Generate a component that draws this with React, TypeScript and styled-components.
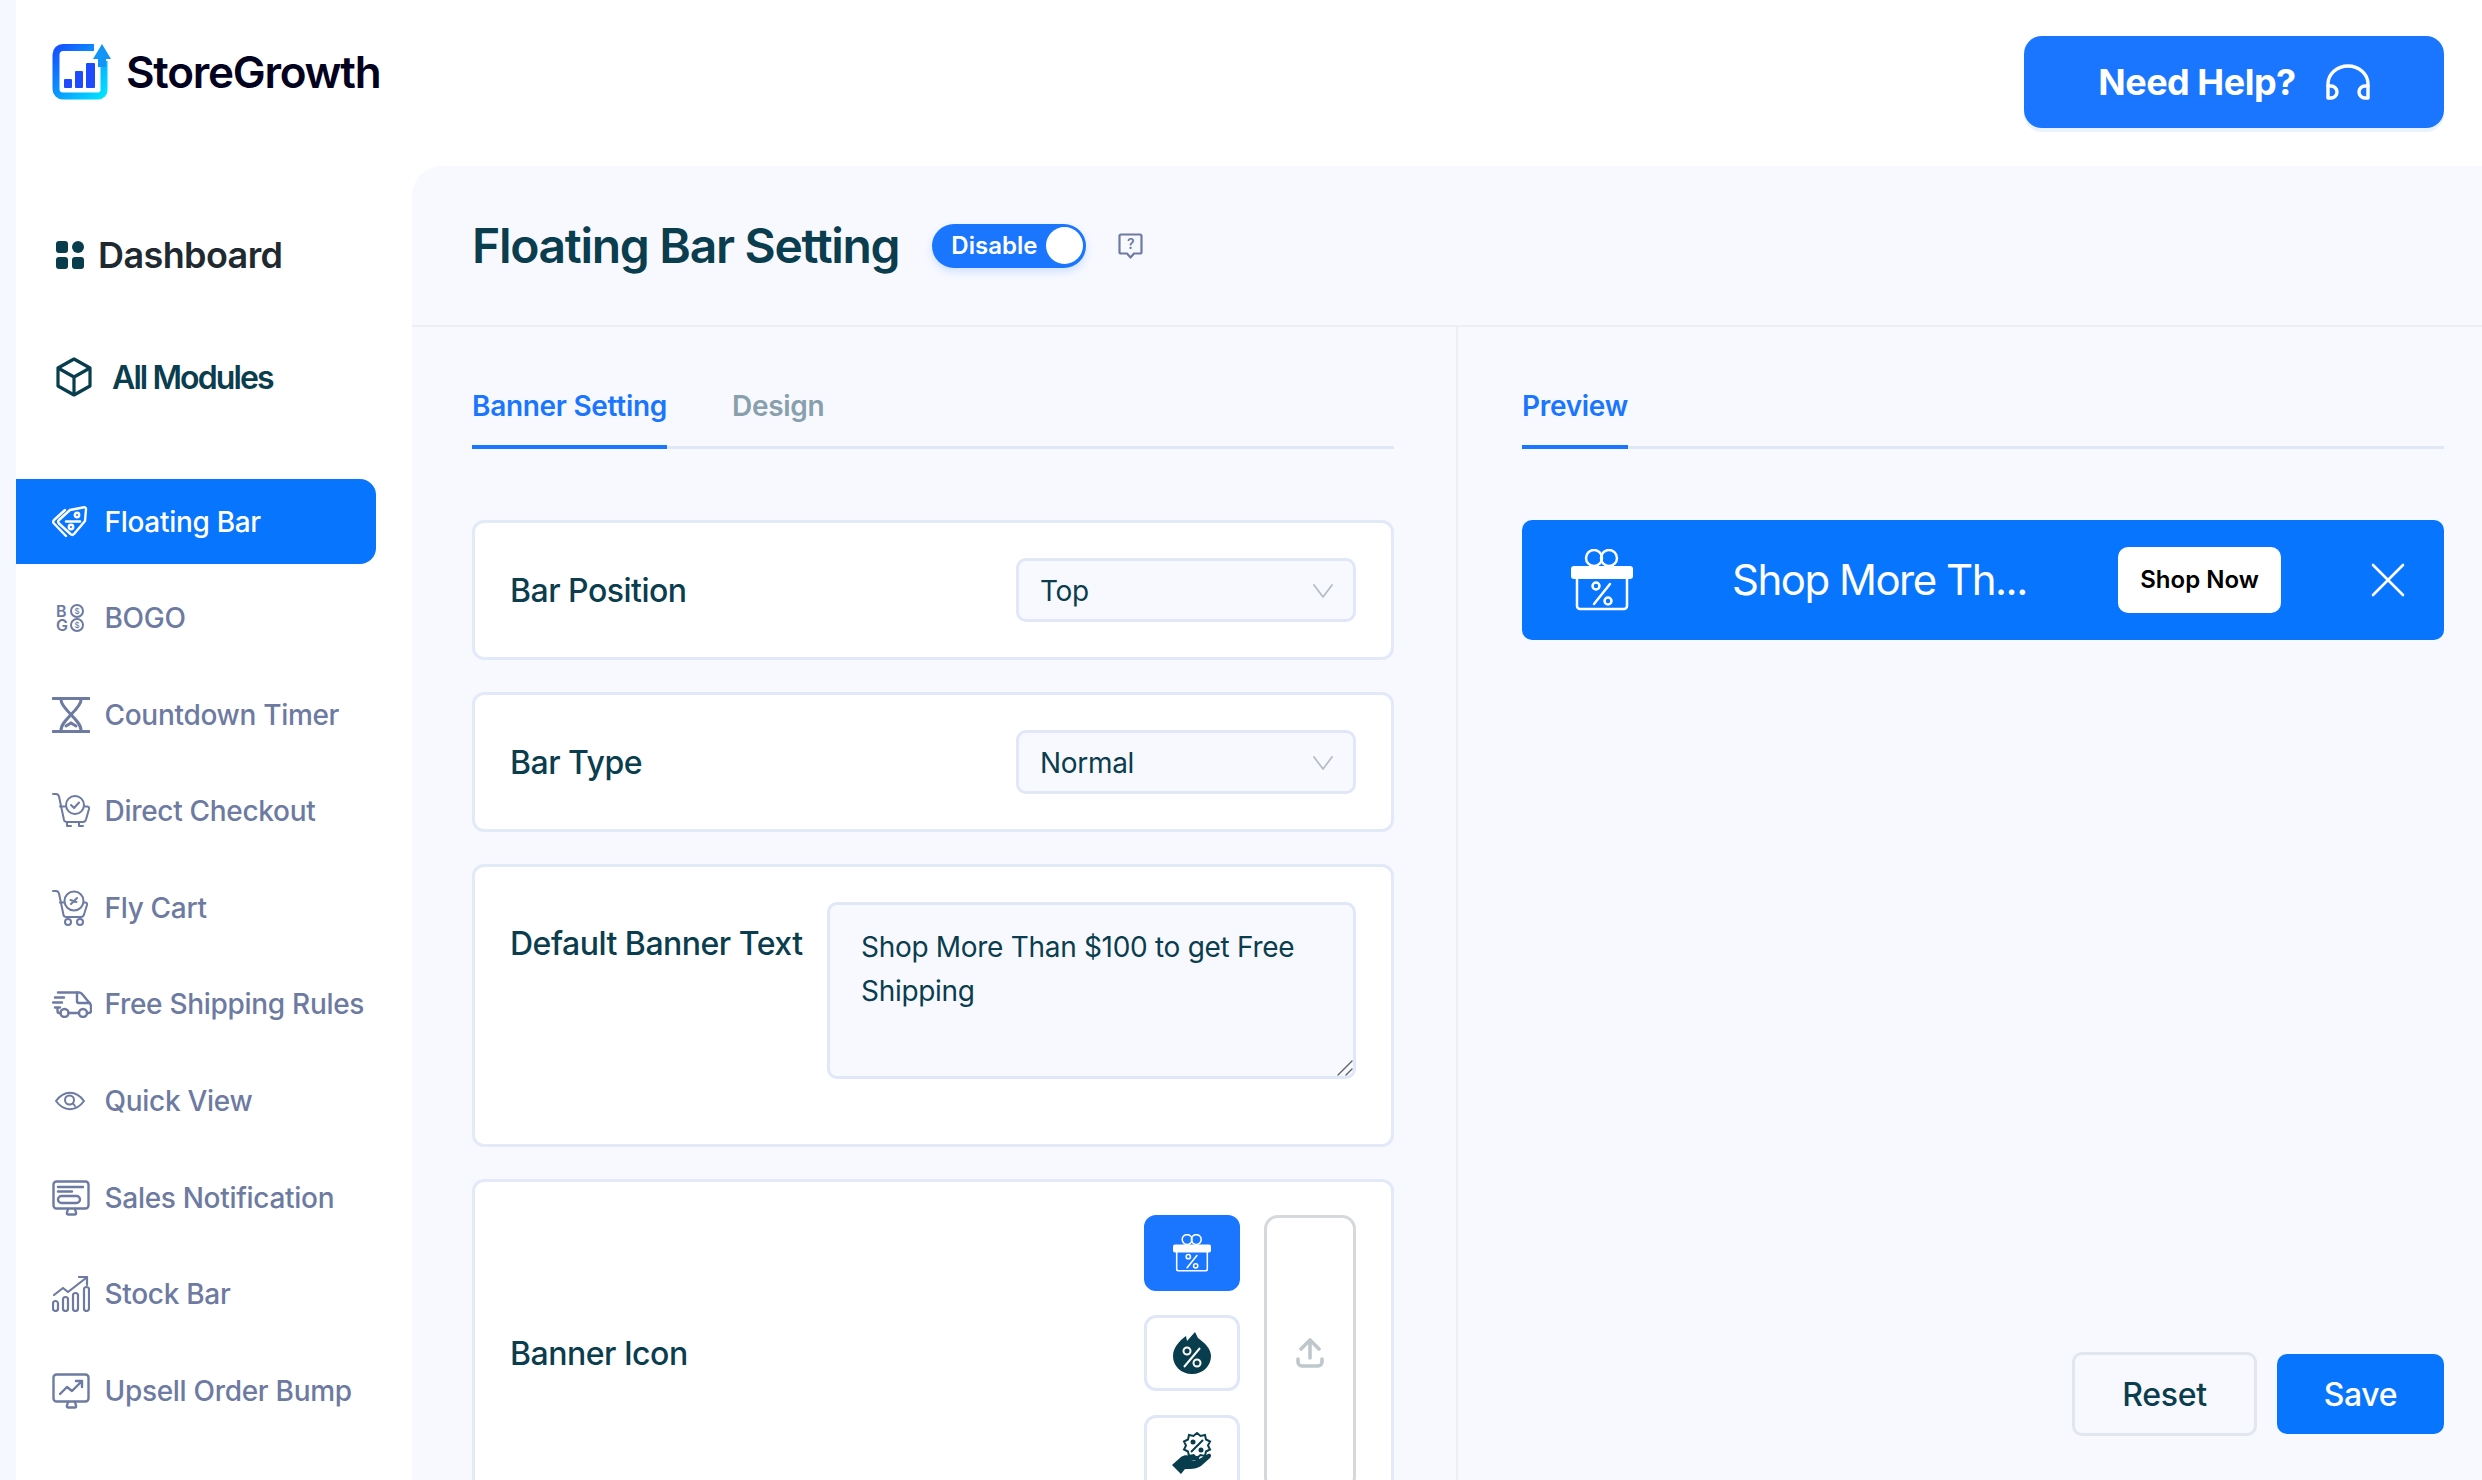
import React from 'react';
import styled, { createGlobalStyle } from 'styled-components';

const GlobalStyle = createGlobalStyle`
  html, body {
    margin: 0;
    padding: 0;
    height: 1480px;
    overflow: hidden;
    background: #f5f8ff;
    font-family: 'Inter', 'Liberation Sans', sans-serif;
  }
  * { box-sizing: border-box; }
`;

const Page = styled.div`
  height: 1480px;
  padding-left: 16px;
  background: #f5f8ff;
  overflow: hidden;
`;

const Shell = styled.div`
  height: 100%;
  background: #fff;
  display: flex;
  flex-direction: column;
`;

const TopBar = styled.header`
  height: 166px;
  flex: none;
  display: flex;
  justify-content: space-between;
  align-items: flex-start;
  padding: 36px 38px 0 36px;
`;

const Brand = styled.div`
  display: flex;
  align-items: center;
  gap: 15px;
  margin-top: 8px;
`;

const BrandName = styled.span`
  font-size: 44px;
  line-height: 56px;
  font-weight: 600;
  letter-spacing: -1.25px;
  color: #02021e;
`;

const HelpButton = styled.button`
  width: 420px;
  height: 92px;
  border: 0;
  border-radius: 18px;
  background: #1a76ff;
  color: #fff;
  font: 700 36px 'Inter', sans-serif;
  letter-spacing: -0.5px;
  display: flex;
  align-items: center;
  justify-content: center;
  gap: 30px;
  box-shadow: 0 4px 0 #eaf1ff;
`;

const Body = styled.div`
  flex: 1;
  min-height: 0;
  display: flex;
`;

const Sidebar = styled.nav`
  width: 396px;
  flex: none;
  display: flex;
  flex-direction: column;
`;

const TopLink = styled.div<{ $big?: boolean }>`
  height: ${p => (p.$big ? 60 : 50)}px;
  display: flex;
  align-items: center;
  padding-left: 40px;
  gap: ${p => (p.$big ? 14 : 20)}px;
  font-size: ${p => (p.$big ? 36 : 32)}px;
  font-weight: 600;
  letter-spacing: ${p => (p.$big ? -0.6 : -1.9)}px;
  color: ${p => (p.$big ? '#1f2a30' : '#0a3d4e')};
  margin-top: ${p => (p.$big ? 59 : 67)}px;
`;

const ModuleList = styled.div`
  margin-top: 77px;
  display: flex;
  flex-direction: column;
  gap: 11.6px;
`;

const ModuleRow = styled.div<{ $active?: boolean }>`
  width: 360px;
  height: 85px;
  display: flex;
  align-items: center;
  padding-left: 36px;
  border-radius: 0 16px 16px 0;
  background: ${p => (p.$active ? '#0875ff' : 'transparent')};
  color: ${p => (p.$active ? '#fff' : '#6d7aa1')};
  font-size: 28px;
  font-weight: 500;
  letter-spacing: -0.3px;
  white-space: nowrap;
`;

const ModuleIcon = styled.span`
  width: 52.5px;
  flex: none;
  display: flex;
  align-items: center;
  svg { display: block; }
`;

const BogoMark = styled.span`
  margin-left: 4px;
  display: grid;
  grid-template-columns: 14px 14px;
  grid-auto-rows: 14px;
  font-size: 16px;
  font-weight: 600;
  line-height: 14px;
  letter-spacing: 0;
`;

const BogoCoin = styled.span`
  width: 14px;
  height: 14px;
  border: 2px solid currentColor;
  border-radius: 50%;
  font-size: 8px;
  font-weight: 500;
  line-height: 10px;
  text-align: center;
`;

const Main = styled.main`
  flex: 1;
  min-width: 0;
  background: #f8f9ff;
  border-radius: 30px 0 0 0;
  display: flex;
  flex-direction: column;
  overflow: hidden;
`;

const MainHeader = styled.div`
  height: 161px;
  flex: none;
  display: flex;
  align-items: center;
  padding: 0 0 0 60px;
  border-bottom: 2px solid #eceef3;
`;

const Title = styled.h1`
  margin: 0;
  font-size: 48px;
  font-weight: 600;
  letter-spacing: -1.3px;
  color: #0a3d4e;
`;

const Toggle = styled.div`
  margin-left: 33px;
  width: 154px;
  height: 44px;
  border-radius: 22px;
  background: #1a76ff;
  display: flex;
  align-items: center;
  justify-content: space-between;
  padding: 0 3px 0 19px;
  color: #fff;
  font-size: 24px;
  font-weight: 600;
  box-shadow: 0 4px 8px rgba(26, 118, 255, 0.18);
`;

const Knob = styled.span`
  width: 37px;
  height: 37px;
  border-radius: 50%;
  background: #fff;
`;

const HelpTip = styled.span`
  position: relative;
  margin-left: 32px;
  display: flex;
`;

const HelpMark = styled.span`
  position: absolute;
  left: 0;
  right: 0;
  top: 3px;
  text-align: center;
  font-size: 14px;
  line-height: 16px;
  font-weight: 600;
  color: #6d7aa1;
`;

const Columns = styled.div`
  flex: 1;
  min-height: 0;
  display: grid;
  grid-template-columns: 1046px 1fr;
`;

const SettingsCol = styled.section`
  padding: 0 62px 0 60px;
  border-right: 2px solid #eceef3;
  min-height: 0;
  overflow: hidden;
`;

const PreviewCol = styled.section`
  padding: 0 38px 44px 64px;
  display: flex;
  flex-direction: column;
  min-height: 0;
`;

const Tabs = styled.div`
  height: 122px;
  display: flex;
  gap: 65px;
  align-items: flex-end;
  border-bottom: 3px solid #e0e8f8;
  flex: none;
`;

const Tab = styled.div<{ $active?: boolean }>`
  height: 60px;
  margin-bottom: -3px;
  font-size: 28px;
  font-weight: 600;
  letter-spacing: -0.3px;
  color: ${p => (p.$active ? '#1a76ff' : '#87a0ab')};
  border-bottom: 4px solid ${p => (p.$active ? '#1a76ff' : 'transparent')};
`;

const CardStack = styled.div`
  margin-top: 70.5px;
  display: flex;
  flex-direction: column;
  gap: 32px;
`;

const Card = styled.div<{ $align?: string }>`
  min-height: 140px;
  background: #fff;
  border: 3px solid #e2eafa;
  border-radius: 12px;
  display: flex;
  align-items: ${p => p.$align || 'center'};
  justify-content: space-between;
  padding: 0 35px 0 35px;
`;

const Label = styled.div<{ $top?: number }>`
  font-size: 32px;
  font-weight: 500;
  letter-spacing: -0.5px;
  color: #0a3d4e;
  white-space: nowrap;
  padding-top: 2px;
  margin-top: ${p => p.$top || 0}px;
`;

const Select = styled.div`
  width: 340px;
  height: 64px;
  background: #f8f9ff;
  border: 3px solid #e0e8f8;
  border-radius: 10px;
  display: flex;
  align-items: center;
  justify-content: space-between;
  padding: 2px 20px 0 21px;
  font-size: 28px;
  letter-spacing: -0.3px;
  color: #0a3d4e;
`;

const TextWrap = styled.div`
  position: relative;
  width: 529px;
  height: 177px;
  margin: 35px 0 65px;
`;

const TextBox = styled.textarea`
  display: block;
  width: 100%;
  height: 100%;
  padding: 20.5px 31px;
  background: #f8f9ff;
  border: 3px solid #e0e8f8;
  border-radius: 10px;
  font: 400 28px/44px 'Inter', sans-serif;
  letter-spacing: -0.3px;
  color: #0a3d4e;
  outline: none;
  resize: none;
`;

const Grip = styled.svg`
  position: absolute;
  right: 2px;
  bottom: 3px;
`;

const IconPicker = styled.div`
  display: flex;
  gap: 24px;
  padding: 33px 0;
`;

const IconColumn = styled.div`
  display: flex;
  flex-direction: column;
  gap: 24px;
`;

const IconChoice = styled.div<{ $active?: boolean }>`
  width: 96px;
  height: 76px;
  border-radius: 12px;
  display: flex;
  align-items: center;
  justify-content: center;
  background: ${p => (p.$active ? '#1a76ff' : '#fff')};
  border: 3px solid ${p => (p.$active ? '#1a76ff' : '#e0e8f8')};
`;

const UploadBox = styled.div`
  width: 92px;
  border: 3px solid #d5d9dc;
  border-radius: 14px;
  display: flex;
  align-items: center;
  justify-content: center;
`;

const Banner = styled.div`
  margin-top: 70.5px;
  height: 120px;
  flex: none;
  border-radius: 10px;
  background: #0875ff;
  display: flex;
  align-items: center;
  padding: 0 39px 0 49px;
  color: #fff;
`;

const BannerText = styled.span`
  margin-left: 99px;
  width: 386px;
  flex: none;
  font-size: 42px;
  letter-spacing: -1.5px;
  white-space: nowrap;
`;

const ShopButton = styled.button`
  width: 163px;
  height: 66px;
  border: 0;
  border-radius: 10px;
  background: #fff;
  color: #000;
  font: 600 24px 'Inter', sans-serif;
`;

const CloseIcon = styled.span`
  margin-left: auto;
  display: flex;
`;

const Footer = styled.div`
  margin-top: auto;
  display: flex;
  justify-content: flex-end;
  align-items: center;
  gap: 20px;
`;

const ResetButton = styled.button`
  width: 185px;
  height: 84px;
  background: transparent;
  border: 3px solid #e2e6ee;
  border-radius: 10px;
  color: #0a3d4e;
  font: 500 32px 'Inter', sans-serif;
  letter-spacing: -0.3px;
`;

const SaveButton = styled.button`
  width: 167px;
  height: 80px;
  background: #0875ff;
  border: 0;
  border-radius: 10px;
  color: #fff;
  font: 500 32px 'Inter', sans-serif;
  letter-spacing: -0.4px;
`;

type IconProps = { size?: number };

const line = { fill: 'none', stroke: 'currentColor', strokeWidth: 2.4, strokeLinecap: 'round', strokeLinejoin: 'round' } as const;

const Logo = () => (
  <svg width="59" height="56" viewBox="0 0 59 56">
    <defs>
      <linearGradient id="sg" x1="0" y1="0" x2="1" y2="1">
        <stop offset="0" stopColor="#1450ff" />
        <stop offset="1" stopColor="#00e4ff" />
      </linearGradient>
    </defs>
    <path d="M42 3.5H11a7 7 0 0 0-7 7V45a7 7 0 0 0 7 7h35a6 6 0 0 0 6-6V17" fill="none" stroke="url(#sg)" strokeWidth="7" />
    <path d="M50 0l9 15h-5v8h-8v-8h-5z" fill="#1296f6" />
    <rect x="12" y="35" width="8" height="9" rx="1" fill="#1f4bff" />
    <rect x="23" y="27" width="8" height="17" rx="1" fill="#1f4bff" />
    <rect x="34" y="19" width="9" height="25" rx="1" fill="#1f4bff" />
  </svg>
);

const Headset = () => (
  <svg width="44" height="36" viewBox="0 0 44 36" fill="none" stroke="#fff" strokeWidth="3.4" strokeLinecap="round" strokeLinejoin="round">
    <path d="M2 33V20a20 18 0 0 1 40 0v13" />
    <path d="M2 22h3a5.5 5.5 0 0 1 0 12H2" />
    <path d="M42 22h-3a5.5 5.5 0 0 0 0 12h3" />
  </svg>
);

const GridIcon = () => (
  <svg width="28" height="28" viewBox="0 0 28 28" fill="#083d4e">
    <rect width="12" height="12" rx="3" />
    <circle cx="22" cy="6" r="6" />
    <rect y="16" width="12" height="12" rx="3" />
    <rect x="16" y="16" width="12" height="12" rx="3" />
  </svg>
);

const CubeIcon = () => (
  <svg width="36" height="40" viewBox="0 0 36 40" fill="none" stroke="#083d4e" strokeWidth="3.2" strokeLinejoin="round">
    <path d="M18 2l16 9v18l-16 9-16-9V11z" />
    <path d="M2 11l16 9 16-9M18 20v18" />
  </svg>
);

const TagsIcon = () => (
  <svg width="36" height="32" viewBox="0 0 36 32" {...line}>
    <path d="M7 14L18 4l13-2.500a2 2 0 0 1 3 2L33 15 22 28a2.500 2.500 0 0 1-3.500 0L7 17.500a2.500 2.500 0 0 1 0-3.500z" />
    <path d="M13 4L2 14a2.500 2.500 0 0 0 0 3.500L14 30" />
    <circle cx="25" cy="9" r="2.200" />
    <circle cx="19" cy="21" r="2.200" />
    <path d="M14 15.500h14" />
  </svg>
);

const BogoIcon = () => (
  <BogoMark>
    <span>B</span>
    <BogoCoin>$</BogoCoin>
    <span>G</span>
    <BogoCoin>$</BogoCoin>
  </BogoMark>
);

const HourglassIcon = () => (
  <svg width="38" height="36" viewBox="0 0 38 36" fill="none" stroke="currentColor" strokeWidth="3" strokeLinecap="round">
    <path d="M1 1.500h36M1 34.500h36" />
    <path d="M9 3c0 9 20 20 20 30M29 3c0 9-20 20-20 30" />
    <path d="M14 29l5-3 5 3" />
  </svg>
);

const CheckoutIcon = () => (
  <svg width="38" height="36" viewBox="0 0 38 36" {...line} strokeWidth="2">
    <path d="M1 1h3c1.500 0 2.500 1 3 2.500L12 27c.4 1.500 1.500 2 3 2h16c1.500 0 2.500-1 3-2.500L37 16c.3-1.500-.5-2.500-2-2.500h-2" />
    <path d="M8 13.500h5" />
    <circle cx="23" cy="12" r="9" />
    <path d="M19 12l3 3 5-5.500" />
    <path d="M15 29v4M19 33h-4M27 29v4M31 33h-4" />
  </svg>
);

const FlyCartIcon = () => (
  <svg width="36" height="36" viewBox="0 0 36 36" {...line} strokeWidth="2">
    <path d="M1 1h3c1.500 0 2.500 1 3 2.500L11.500 25c.3 1.500 1.500 2 3 2H29c1.500 0 2.500-1 3-2.500L35 15c.3-1.500-.5-2.500-2-2.500h-1" />
    <path d="M8 12.500h4" />
    <circle cx="22" cy="11" r="9.500" />
    <path d="M19 14l6-6M18.500 10l6 2" />
    <circle cx="16" cy="32" r="3" />
    <circle cx="28" cy="32" r="3" />
  </svg>
);

const TruckIcon = () => (
  <svg width="40" height="27" viewBox="0 0 40 27" {...line}>
    <path d="M6 1.500h21c1.500 0 2.500.5 3.500 2L37.500 12c1 1 1.500 2 1.500 3.500V20c0 1.500-1 2-2.500 2H35" />
    <path d="M25 1.500V10c0 1.500 1 2 2 2h11" />
    <circle cx="12.500" cy="22" r="4" />
    <circle cx="31" cy="22" r="4" />
    <path d="M16.500 22H27M8.500 22H7c-1 0-1.500-.5-1.500-2v-2" />
    <path d="M3 6.500h9M1 11.500h9M3 16.500h5" />
  </svg>
);

const EyeIcon = () => (
  <svg width="30" height="20" viewBox="0 0 30 20" {...line} strokeWidth="2" style={{ marginLeft: 3 }}>
    <path d="M1 10C9-1 21-1 29 10c-8 11-20 11-28 0z" />
    <circle cx="14.500" cy="9" r="4.500" />
    <path d="M18 12.500l2 2.500" />
  </svg>
);

const MonitorBase = ({ children }: { children: React.ReactNode }) => (
  <svg width="38" height="36" viewBox="0 0 38 36" {...line}>
    <rect x="1.500" y="1.500" width="35" height="27" rx="3" />
    <path d="M16 29l-1 3.500c-.3 1.500 0 2 1.500 2h6c1.500 0 1.800-.5 1.500-2L23 29" />
    {children}
  </svg>
);

const SalesIcon = () => (
  <MonitorBase>
    <path d="M6 7h25M6 11.500h14" />
    <rect x="6" y="16" width="22" height="7" rx="3.500" />
  </MonitorBase>
);

const UpsellIcon = () => (
  <MonitorBase>
    <path d="M8 21l7-7 5 4 10-10M24 8h6v6" />
  </MonitorBase>
);

const StockIcon = () => (
  <svg width="38" height="36" viewBox="0 0 38 36" {...line} strokeWidth="2.200">
    <rect x="1" y="25" width="5" height="10" rx="2.500" />
    <rect x="11" y="21" width="5" height="14" rx="2.500" />
    <rect x="21" y="17" width="5" height="18" rx="2.500" />
    <rect x="32" y="11" width="5" height="24" rx="2.500" />
    <path d="M2 19l9-7 5 4L34 2M27 1h8v8" />
  </svg>
);

const GiftIcon = ({ size = 38 }: IconProps) => (
  <svg width={size} height={size} viewBox="0 0 62 62" fill="none" stroke="#fff" strokeWidth="2.500" strokeLinecap="round">
    <circle cx="23" cy="9" r="8" />
    <circle cx="38" cy="9" r="8" />
    <rect x="0" y="17" width="62" height="13" rx="3" fill="#fff" stroke="none" />
    <path d="M6 30v27a3 3 0 0 0 3 3h44a3 3 0 0 0 3-3V30" />
    <circle cx="25" cy="37" r="3.500" />
    <circle cx="37" cy="52" r="3.500" />
    <path d="M39 35L23 55" />
  </svg>
);

const DropIcon = () => (
  <svg width="38" height="42" viewBox="0 0 38 42">
    <path d="M19 42C8 42 0 34 0 24 0 16 6 9 13 4l1 5 8-9 3 6c7 5 13 11 13 18 0 10-8 18-19 18z" fill="#083d4e" />
    <g fill="none" stroke="#fff" strokeWidth="2">
      <circle cx="14" cy="19" r="3.500" />
      <circle cx="24" cy="31" r="3.500" />
      <path d="M27 16L11 35" />
    </g>
  </svg>
);

const HandIcon = () => (
  <svg width="40" height="42" viewBox="0 0 40 42">
    <path d="M25 1l3.500 3 4.500-1 1 4.500 4 2-2 4 2 4-4 2-1 4.500-4.500-1-3.500 3-3.500-3-4.500 1-1-4.500-4-2 2-4-2-4 4-2 1-4.500 4.500 1z" fill="#fff" stroke="#083d4e" strokeWidth="2" />
    <circle cx="21" cy="10" r="2.500" fill="#083d4e" />
    <circle cx="29" cy="18" r="2.500" fill="#083d4e" />
    <path d="M31 8L19 20" stroke="#083d4e" strokeWidth="2" />
    <path d="M0 33l9-8c3-2 6-2 9-1h7c3 0 3 4 0 4h-6c3 1 7 0 10-2l7-4c3-1 4 2 2 4l-9 8c-3 2-7 3-11 3h-5l-4 5z" fill="#083d4e" />
  </svg>
);

const UploadIcon = () => (
  <svg width="28" height="30" viewBox="0 0 28 30" fill="none" stroke="#bec8cc" strokeWidth="3.600" strokeLinecap="round" strokeLinejoin="round">
    <path d="M14 20V3M5 11l9-9 9 9" />
    <path d="M2 21v3a4 4 0 0 0 4 4h16a4 4 0 0 0 4-4v-3" />
  </svg>
);

const Chevron = () => (
  <svg width="20" height="14" viewBox="0 0 20 14" fill="none" stroke="#b5bfc4" strokeWidth="1.800" strokeLinecap="round" strokeLinejoin="round">
    <path d="M1 1l9 12 9-12" />
  </svg>
);

const QuestionBubble = () => (
  <HelpTip>
    <svg width="25" height="26" viewBox="0 0 25 26">
      <path d="M3 1.500h19c1 0 1.500.5 1.500 1.500v16c0 1-.5 1.500-1.500 1.500h-6l-3.500 4-3.500-4H3c-1 0-1.500-.5-1.500-1.500V3c0-1 .5-1.500 1.500-1.500z" fill="none" stroke="#6d7aa1" strokeWidth="2.200" strokeLinejoin="round" />
    </svg>
    <HelpMark>?</HelpMark>
  </HelpTip>
);

const modules = [
  { label: 'Floating Bar', icon: <TagsIcon />, active: true },
  { label: 'BOGO', icon: <BogoIcon /> },
  { label: 'Countdown Timer', icon: <HourglassIcon /> },
  { label: 'Direct Checkout', icon: <CheckoutIcon /> },
  { label: 'Fly Cart', icon: <FlyCartIcon /> },
  { label: 'Free Shipping Rules', icon: <TruckIcon /> },
  { label: 'Quick View', icon: <EyeIcon /> },
  { label: 'Sales Notification', icon: <SalesIcon /> },
  { label: 'Stock Bar', icon: <StockIcon /> },
  { label: 'Upsell Order Bump', icon: <UpsellIcon /> },
];

const App = () => (
  <>
    <GlobalStyle />
    <Page>
      <Shell>
        <TopBar>
          <Brand>
            <Logo />
            <BrandName>StoreGrowth</BrandName>
          </Brand>
          <HelpButton>
            Need Help?
            <Headset />
          </HelpButton>
        </TopBar>
        <Body>
          <Sidebar>
            <TopLink $big>
              <GridIcon />
              Dashboard
            </TopLink>
            <TopLink>
              <CubeIcon />
              All Modules
            </TopLink>
            <ModuleList>
              {modules.map(m => (
                <ModuleRow key={m.label} $active={m.active}>
                  <ModuleIcon>{m.icon}</ModuleIcon>
                  {m.label}
                </ModuleRow>
              ))}
            </ModuleList>
          </Sidebar>
          <Main>
            <MainHeader>
              <Title>Floating Bar Setting</Title>
              <Toggle>
                Disable
                <Knob />
              </Toggle>
              <QuestionBubble />
            </MainHeader>
            <Columns>
              <SettingsCol>
                <Tabs>
                  <Tab $active>Banner Setting</Tab>
                  <Tab>Design</Tab>
                </Tabs>
                <CardStack>
                  <Card>
                    <Label>Bar Position</Label>
                    <Select>
                      Top
                      <Chevron />
                    </Select>
                  </Card>
                  <Card>
                    <Label>Bar Type</Label>
                    <Select>
                      Normal
                      <Chevron />
                    </Select>
                  </Card>
                  <Card $align="flex-start">
                    <Label $top={55}>Default Banner Text</Label>
                    <TextWrap>
                      <TextBox readOnly value="Shop More Than $100 to get Free Shipping" />
                      <Grip width="18" height="16" viewBox="0 0 18 16" fill="none" stroke="#5c6468" strokeWidth="1.400" strokeLinecap="round">
                        <path d="M2 15L16 1M10 15l6-6" />
                      </Grip>
                    </TextWrap>
                  </Card>
                  <Card>
                    <Label>Banner Icon</Label>
                    <IconPicker>
                      <IconColumn>
                        <IconChoice $active>
                          <GiftIcon />
                        </IconChoice>
                        <IconChoice>
                          <DropIcon />
                        </IconChoice>
                        <IconChoice>
                          <HandIcon />
                        </IconChoice>
                      </IconColumn>
                      <UploadBox>
                        <UploadIcon />
                      </UploadBox>
                    </IconPicker>
                  </Card>
                </CardStack>
              </SettingsCol>
              <PreviewCol>
                <Tabs>
                  <Tab $active>Preview</Tab>
                </Tabs>
                <Banner>
                  <GiftIcon size={62} />
                  <BannerText>Shop More Th...</BannerText>
                  <ShopButton>Shop Now</ShopButton>
                  <CloseIcon>
                    <svg width="34" height="34" viewBox="0 0 34 34" fill="none" stroke="#fff" strokeWidth="2.600" strokeLinecap="round">
                      <path d="M2 2l30 30M32 2L2 32" />
                    </svg>
                  </CloseIcon>
                </Banner>
                <Footer>
                  <ResetButton>Reset</ResetButton>
                  <SaveButton>Save</SaveButton>
                </Footer>
              </PreviewCol>
            </Columns>
          </Main>
        </Body>
      </Shell>
    </Page>
  </>
);

export default App;
